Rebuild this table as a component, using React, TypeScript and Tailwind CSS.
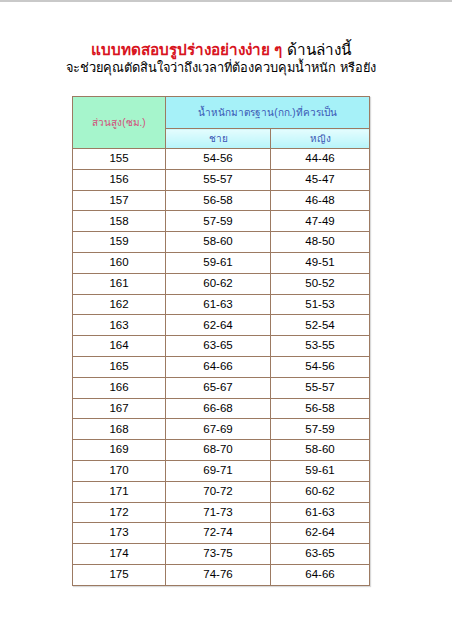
const rows: [number, string, string][] = [
  [155, '54-56', '44-46'],
  [156, '55-57', '45-47'],
  [157, '56-58', '46-48'],
  [158, '57-59', '47-49'],
  [159, '58-60', '48-50'],
  [160, '59-61', '49-51'],
  [161, '60-62', '50-52'],
  [162, '61-63', '51-53'],
  [163, '62-64', '52-54'],
  [164, '63-65', '53-55'],
  [165, '64-66', '54-56'],
  [166, '65-67', '55-57'],
  [167, '66-68', '56-58'],
  [168, '67-69', '57-59'],
  [169, '68-70', '58-60'],
  [170, '69-71', '59-61'],
  [171, '70-72', '60-62'],
  [172, '71-73', '61-63'],
  [173, '72-74', '62-64'],
  [174, '73-75', '63-65'],
  [175, '74-76', '64-66'],
];

const App = () => {
  return (
    <div className="w-[452px] h-[639px] bg-white border-t-2 border-[#c9c9c9] font-['Liberation_Sans','Noto_Sans',sans-serif] text-black">
      <div className="w-[442px] pt-[39px] flex flex-col items-center">
        {/* Title */}
        <h1 className="text-[15.3px] leading-[18px]">
          <span className="font-bold text-[#d8141e]">แบบทดสอบรูปร่างอย่างง่าย ๆ</span>{' '}
          <span>ด้านล่างนี้</span>
        </h1>
        <p className="text-[12.8px] leading-[18px]">จะช่วยคุณตัดสินใจว่าถึงเวลาที่ต้องควบคุมน้ำหนัก หรือยัง</p>

        {/* Table */}
        <table className="mt-[19px] w-[298px] border-collapse border border-[#9c7a62] text-center shadow-[1px_1px_1px_rgba(0,0,0,0.15)]">
          <thead>
            <tr className="h-[32px]">
              <th
                rowSpan={2}
                className="w-[93px] bg-[#a6f5cc] border border-[#9c7a62] font-normal text-[10px] text-[#d2507a]"
              >
                ส่วนสูง(ซม.)
              </th>
              <th colSpan={2} className="bg-[#a6f1f8] border border-[#9c7a62] font-normal text-[10px] text-[#3a56b4]">
                น้ำหนักมาตรฐาน(กก.)ที่ควรเป็น
              </th>
            </tr>
            <tr className="h-[20px]">
              <th className="w-[105px] bg-gradient-to-b from-[#e4fdfe] to-[#b6f4fa] border border-[#9c7a62] font-normal text-[10px] text-[#3a56b4]">
                ชาย
              </th>
              <th className="bg-gradient-to-b from-[#e4fdfe] to-[#b6f4fa] border border-[#9c7a62] font-normal text-[10px] text-[#3a56b4]">
                หญิง
              </th>
            </tr>
          </thead>
          <tbody>
            {rows.map(([h, m, f]) => (
              <tr key={h} className="h-[20.8px] text-[11.5px]">
                <td className="border border-[#9c7a62] leading-none">{h}</td>
                <td className="border border-[#9c7a62] leading-none">{m}</td>
                <td className="border border-[#9c7a62] leading-none">{f}</td>
              </tr>
            ))}
          </tbody>
        </table>
      </div>
    </div>
  );
};

export default App;
